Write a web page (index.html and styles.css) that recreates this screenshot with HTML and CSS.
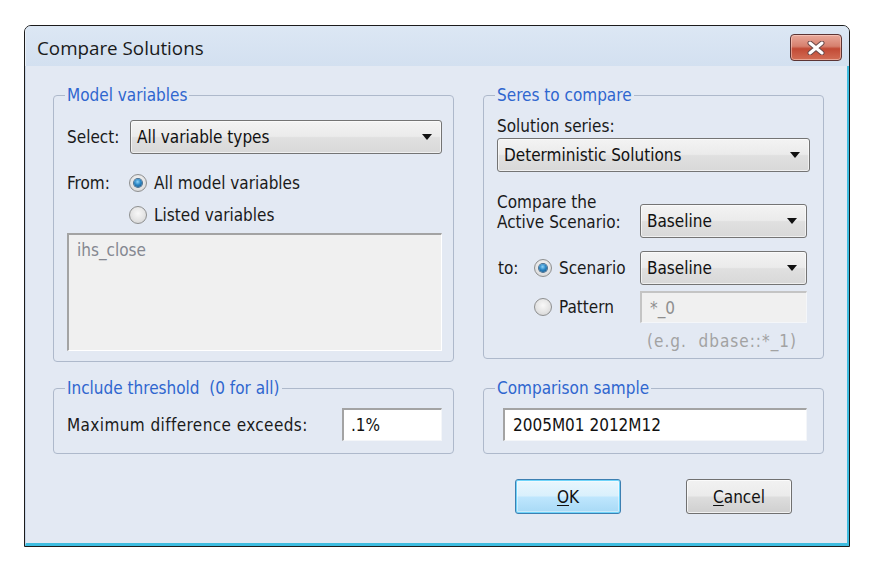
FILE: index.html
```html
<!DOCTYPE html>
<html>
<head>
<meta charset="utf-8">
<link rel="stylesheet" href="styles.css">
</head>
<body>
<div class="window">
  <div class="titlebar">
    <span class="title">Compare Solutions</span>
    <div class="close">
      <svg width="20" height="14" viewBox="0 0 20 14">
        <path d="M4 2 L16 12 M16 2 L4 12" stroke="#6a4a4a" stroke-width="5" stroke-linecap="round"/>
        <path d="M4 2 L16 12 M16 2 L4 12" stroke="#ffffff" stroke-width="3" stroke-linecap="round"/>
      </svg>
    </div>
  </div>
  <div class="client">
    <div class="groups">
      <fieldset class="group">
        <legend>Model variables</legend>
        <div class="row r-select">
          <span class="lbl lbl-select">Select:</span>
          <div class="combo c-wide"><span>All variable types</span><i class="arrow"></i></div>
        </div>
        <div class="row r-radio r-from">
          <span class="lbl lbl-from">From:</span>
          <span class="radio"><span class="circle on"></span>All model variables</span>
        </div>
        <div class="row r-radio r-listed">
          <span class="radio"><span class="circle"></span>Listed variables</span>
        </div>
        <div class="listbox">ihs_close</div>
      </fieldset>

      <fieldset class="group">
        <legend>Seres to compare</legend>
        <div class="line r-series">Solution series:</div>
        <div class="combo c-series"><span>Deterministic Solutions</span><i class="arrow"></i></div>
        <div class="row r-compare">
          <span class="lbl lbl-compare">Compare the<br>Active Scenario:</span>
          <div class="combo c-small"><span>Baseline</span><i class="arrow"></i></div>
        </div>
        <div class="row r-to">
          <span class="lbl lbl-to">to:</span>
          <span class="radio r-opt"><span class="circle on"></span>Scenario</span>
          <div class="combo c-small"><span>Baseline</span><i class="arrow"></i></div>
        </div>
        <div class="row r-pattern">
          <span class="radio r-opt"><span class="circle"></span>Pattern</span>
          <div class="textbox disabled t-pattern">*_0</div>
        </div>
        <div class="hint">(e.g.&nbsp; dbase::*_1)</div>
      </fieldset>

      <fieldset class="group g-small">
        <legend>Include threshold&nbsp; (0 for all)</legend>
        <div class="row r-thresh">
          <span class="lbl lbl-max">Maximum difference exceeds:</span>
          <div class="textbox t-thresh">.1%</div>
        </div>
      </fieldset>

      <fieldset class="group g-small">
        <legend>Comparison sample</legend>
        <div class="row r-thresh">
          <div class="textbox t-sample">2005M01 2012M12</div>
        </div>
      </fieldset>
    </div>
    <div class="buttons">
      <div class="btn btn-ok"><u>O</u>K</div>
      <div class="btn btn-cancel"><u>C</u>ancel</div>
    </div>
  </div>
</div>
</body>
</html>
```

FILE: styles.css
```css
html, body {
  margin: 0;
  padding: 0;
  background: #ffffff;
}
body {
  padding: 25px 0 0 24px;
  font-family: "DejaVu Sans Condensed", "DejaVu Sans", sans-serif;
  font-size: 17px;
  color: #1a1a1a;
}
.window {
  width: 824px;
  height: 520px;
  border: 1px solid #1c1c1c;
  border-radius: 7px 7px 0 0;
  background: #d6e2f1;
  display: flex;
  flex-direction: column;
  overflow: hidden;
}
.titlebar {
  height: 40px;
  flex: none;
  display: flex;
  justify-content: space-between;
  align-items: flex-start;
  padding-left: 12px;
  background: linear-gradient(#dce7f4, #d3e0f0);
  border-left: 1px solid #e9f0f8;
}
.title {
  font-family: "Open Sans", sans-serif;
  font-size: 18.8px;
  line-height: 22px;
  margin-top: 11px;
  margin-left: -1px;
  color: #1a1a1a;
}
.close {
  width: 50px;
  height: 25px;
  margin-top: 8px;
  margin-right: 7px;
  border: 1px solid #5c3434;
  border-radius: 4px;
  background: linear-gradient(#e9a99b 0%, #d6806e 45%, #c24a35 55%, #d26d55 100%);
  display: flex;
  align-items: center;
  justify-content: center;
  box-shadow: inset 0 0 0 1px rgba(255,220,210,0.5);
}
.client {
  flex: 1;
  background: #e3e9f3;
  border-left: 1px solid #c9d6e8;
  border-right: 2px solid #3fbde0;
  border-bottom: 3px solid #3fbde0;
  padding: 20px 0 0 27px;
}
.groups {
  display: grid;
  grid-template-columns: 401px 341px;
  column-gap: 29px;
  row-gap: 17px;
  align-items: start;
}
.group {
  margin: 0;
  padding: 0 11px 10px 13px;
  border: 1px solid #aeb9cb;
  border-radius: 4px;
  min-width: 0;
}
.group:nth-child(2) {
  padding: 0 13px 7px 13px;
}
.group.g-small {
  padding-bottom: 12px;
}
legend {
  padding: 0 2px;
  margin-left: -2px;
  line-height: 18px;
  color: #2f66cf;
}
.row {
  display: flex;
  align-items: center;
}
.lbl {
  flex: none;
}
.lbl-max {
  letter-spacing: 0.4px;
}
.r-select {
  margin-top: 16px;
  height: 34px;
}
.lbl-select { width: 63px; }
.combo {
  box-sizing: border-box;
  height: 34px;
  border: 1px solid #747474;
  border-radius: 3px;
  background: linear-gradient(#f3f3f3 0%, #ebebeb 48%, #e0e0e0 52%, #d8d8d8 100%);
  display: flex;
  align-items: center;
  justify-content: space-between;
  padding: 0 9px 0 6px;
  box-shadow: inset 0 0 0 1px rgba(255,255,255,0.6);
  color: #111;
}
.combo span { line-height: 20px; }
.arrow {
  width: 0;
  height: 0;
  border-left: 5px solid transparent;
  border-right: 5px solid transparent;
  border-top: 6px solid #111;
}
.c-wide { width: 312px; }
.c-series { width: 313px; margin-top: 2px; }
.c-small { width: 167px; }
.r-radio { height: 24px; }
.r-from { margin-top: 17px; }
.r-listed { margin-top: 8px; padding-left: 62px; }
.lbl-from { width: 62px; }
.radio {
  display: flex;
  align-items: center;
  gap: 7px;
}
.circle {
  box-sizing: border-box;
  width: 18px;
  height: 18px;
  border-radius: 50%;
  border: 1px solid #8e8f8f;
  background: radial-gradient(circle at 50% 40%, #f8f8f8 0%, #e6e6e6 50%, #cfcfcf 100%);
  display: flex;
  align-items: center;
  justify-content: center;
  flex: none;
}
.circle.on::after {
  content: "";
  width: 8px;
  height: 8px;
  border-radius: 50%;
  background: radial-gradient(circle at 45% 35%, #8fd3f7 0%, #2b87c6 45%, #104a7a 100%);
  box-shadow: 0 0 0 1px #4a6f8f;
}
.listbox {
  box-sizing: border-box;
  margin-top: 6px;
  height: 118px;
  background: #f0f0f0;
  border-top: 2px solid #a3a3a3;
  border-left: 2px solid #a3a3a3;
  border-right: 1px solid #ffffff;
  border-bottom: 1px solid #ffffff;
  padding: 6px 0 0 8px;
  line-height: 19px;
  color: #858891;
}
.line {
  line-height: 19px;
}
.r-series { margin-top: 13px; }
.r-compare {
  margin-top: 20px;
  align-items: flex-start;
}
.lbl-compare {
  width: 143px;
  line-height: 20px;
}
.r-compare .combo { margin-top: 12px; }
.r-to {
  margin-top: 13px;
  height: 34px;
}
.lbl-to {
  width: 36px;
  padding-left: 1px;
}
.r-opt { width: 106px; }
.r-pattern {
  margin-top: 6px;
  padding-left: 37px;
  height: 32px;
}
.textbox {
  box-sizing: border-box;
  height: 33px;
  background: #ffffff;
  border-top: 2px solid #a3a3a3;
  border-left: 2px solid #a3a3a3;
  border-right: 1px solid #f4f6f9;
  border-bottom: 1px solid #f4f6f9;
  display: flex;
  align-items: center;
  color: #111;
}
.textbox.disabled {
  background: #f0f0f0;
  color: #8f8f8f;
  border-top-color: #c4c4c4;
  border-left-color: #c4c4c4;
}
.t-pattern {
  width: 167px;
  height: 32px;
  padding-left: 8px;
}
.hint {
  margin-top: 9px;
  margin-left: 150px;
  line-height: 19px;
  letter-spacing: 1px;
  color: #a2a2a2;
}
.r-thresh {
  margin-top: 11px;
  justify-content: space-between;
}
.t-thresh {
  width: 100px;
  padding-left: 7px;
}
.t-sample {
  width: 304px;
  margin-left: 6px;
  padding-left: 8px;
}
.buttons {
  display: flex;
  justify-content: flex-end;
  gap: 65px;
  margin-top: 25px;
  padding-right: 55px;
}
.btn {
  box-sizing: border-box;
  width: 106px;
  height: 35px;
  border-radius: 3px;
  display: flex;
  align-items: center;
  justify-content: center;
  color: #111;
}
.btn u { text-decoration-thickness: 1px; text-underline-offset: 2px; }
.btn-ok {
  border: 1px solid #3c7fb1;
  background: linear-gradient(#eaf6fd 0%, #d9f0fc 48%, #bee6fd 52%, #a7d9f5 100%);
  box-shadow: inset 0 0 0 1px #6fd4fa, inset 0 0 0 2px rgba(255,255,255,0.4);
}
.btn-cancel {
  border: 1px solid #707070;
  background: linear-gradient(#f2f2f2 0%, #ebebeb 48%, #dddddd 52%, #cfcfcf 100%);
  box-shadow: inset 0 0 0 1px rgba(255,255,255,0.7);
}
```
